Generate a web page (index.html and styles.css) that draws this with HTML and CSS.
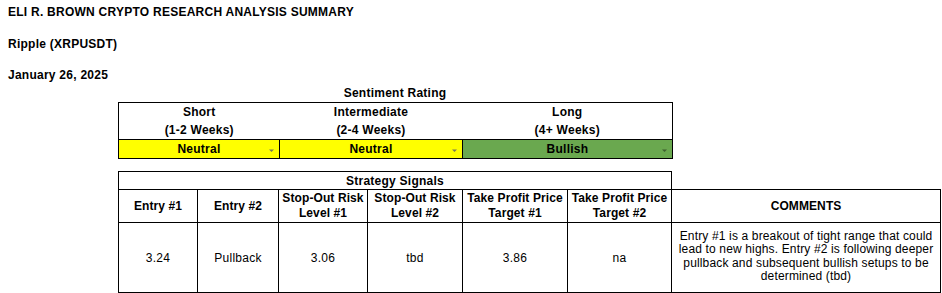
FILE: index.html
```html
<!DOCTYPE html>
<html>
<head>
<meta charset="utf-8">
<link rel="stylesheet" href="styles.css">
</head>
<body>
<div class="page">
  <div class="meta">
    <div class="meta-line">ELI R. BROWN CRYPTO RESEARCH ANALYSIS SUMMARY</div>
    <div class="meta-line">Ripple (XRPUSDT)</div>
    <div class="meta-line">January 26, 2025</div>
  </div>

  <div class="sheet">
    <div class="sent-title">Sentiment Rating</div>
    <table class="sentiment">
      <colgroup>
        <col class="c-short">
        <col class="c-inter">
        <col class="c-long">
      </colgroup>
      <tr class="hrow top">
        <td>Short</td>
        <td>Intermediate</td>
        <td>Long</td>
      </tr>
      <tr class="hrow bottom">
        <td>(1-2 Weeks)</td>
        <td>(2-4 Weeks)</td>
        <td>(4+ Weeks)</td>
      </tr>
      <tr class="vrow">
        <td class="val neutral">Neutral<span class="arrow"><svg width="7" height="5" viewBox="0 0 7 5"><path d="M1 1.5h5L3.5 4z" fill="#7a7a55"/></svg></span></td>
        <td class="val neutral">Neutral<span class="arrow"><svg width="7" height="5" viewBox="0 0 7 5"><path d="M1 1.5h5L3.5 4z" fill="#7a7a55"/></svg></span></td>
        <td class="val bullish">Bullish<span class="arrow"><svg width="7" height="5" viewBox="0 0 7 5"><path d="M1 1.5h5L3.5 4z" fill="#3d5f2f"/></svg></span></td>
      </tr>
    </table>

    <table class="strategy">
      <colgroup>
        <col class="s1"><col class="s2"><col class="s3"><col class="s4"><col class="s5"><col class="s6"><col class="s7">
      </colgroup>
      <tr class="trow">
        <td colspan="6" class="stitle">Strategy Signals</td>
        <td class="blank"></td>
      </tr>
      <tr class="shead">
        <td>Entry #1</td>
        <td>Entry #2</td>
        <td>Stop-Out Risk<br>Level #1</td>
        <td>Stop-Out Risk<br>Level #2</td>
        <td>Take Profit Price<br>Target #1</td>
        <td>Take Profit Price<br>Target #2</td>
        <td>COMMENTS</td>
      </tr>
      <tr class="sdata">
        <td>3.24</td>
        <td>Pullback</td>
        <td>3.06</td>
        <td>tbd</td>
        <td>3.86</td>
        <td>na</td>
        <td class="comment">Entry #1 is a breakout of tight range that could lead to new highs. Entry #2 is following deeper pullback and subsequent bullish setups to be determined (tbd)</td>
      </tr>
    </table>
  </div>
</div>
</body>
</html>
```

FILE: styles.css
```css
* { box-sizing: border-box; }
html, body { margin: 0; padding: 0; background: #ffffff; }
body {
  font-family: "Liberation Sans", Arial, sans-serif;
  font-size: 12px;
  letter-spacing: 0.25px;
  color: #000000;
  width: 942px;
  height: 293px;
  overflow: hidden;
}
.page { padding-top: 3px; }
.meta { padding-left: 8px; font-weight: bold; }
.meta-line { height: 18px; line-height: 18px; }
.meta-line + .meta-line { margin-top: 14px; }
.meta-line:nth-child(3) { margin-top: 13px; }

.sheet { margin-left: 118px; }
.sent-title {
  width: 554px;
  height: 18px;
  line-height: 18px;
  text-align: center;
  font-weight: bold;
}
table {
  border-collapse: collapse;
  table-layout: fixed;
}
td { padding: 0; text-align: center; }

.sentiment { width: 554px; font-weight: bold; }
.c-short { width: 161px; }
.c-inter { width: 183px; }
.c-long { width: 210px; }
.sentiment td {
  height: 18px;
  line-height: 18px;
}
.sentiment .hrow td:first-child { border-left: 1px solid #000; }
.sentiment .hrow td:last-child { border-right: 1px solid #000; }
.sentiment .hrow.top td { border-top: 1px solid #000; }
.sentiment .vrow td { border: 1px solid #000; }
.val { position: relative; }
.neutral { background: #ffff00; }
.bullish { background: #6aa84f; }
.arrow {
  position: absolute;
  right: 4px;
  top: 8px;
  width: 7px;
  height: 5px;
  line-height: 0;
}

.strategy { width: 822px; margin-top: 12px; }
.s1 { width: 79px; }
.s2 { width: 81px; }
.s3 { width: 89px; }
.s4 { width: 95px; }
.s5 { width: 105px; }
.s6 { width: 104px; }
.s7 { width: 269px; }
.strategy td { border: 1px solid #000; }
.strategy td.blank { border: none; }
.trow td { height: 18px; line-height: 16px; }
.stitle { font-weight: bold; }
.shead td { height: 33px; line-height: 15px; font-weight: bold; letter-spacing: 0.1px; }
.sdata td { height: 70px; line-height: 14px; }
.sdata td.comment { line-height: 13.4px; padding: 0 3px 2px; letter-spacing: 0.15px; }
```
